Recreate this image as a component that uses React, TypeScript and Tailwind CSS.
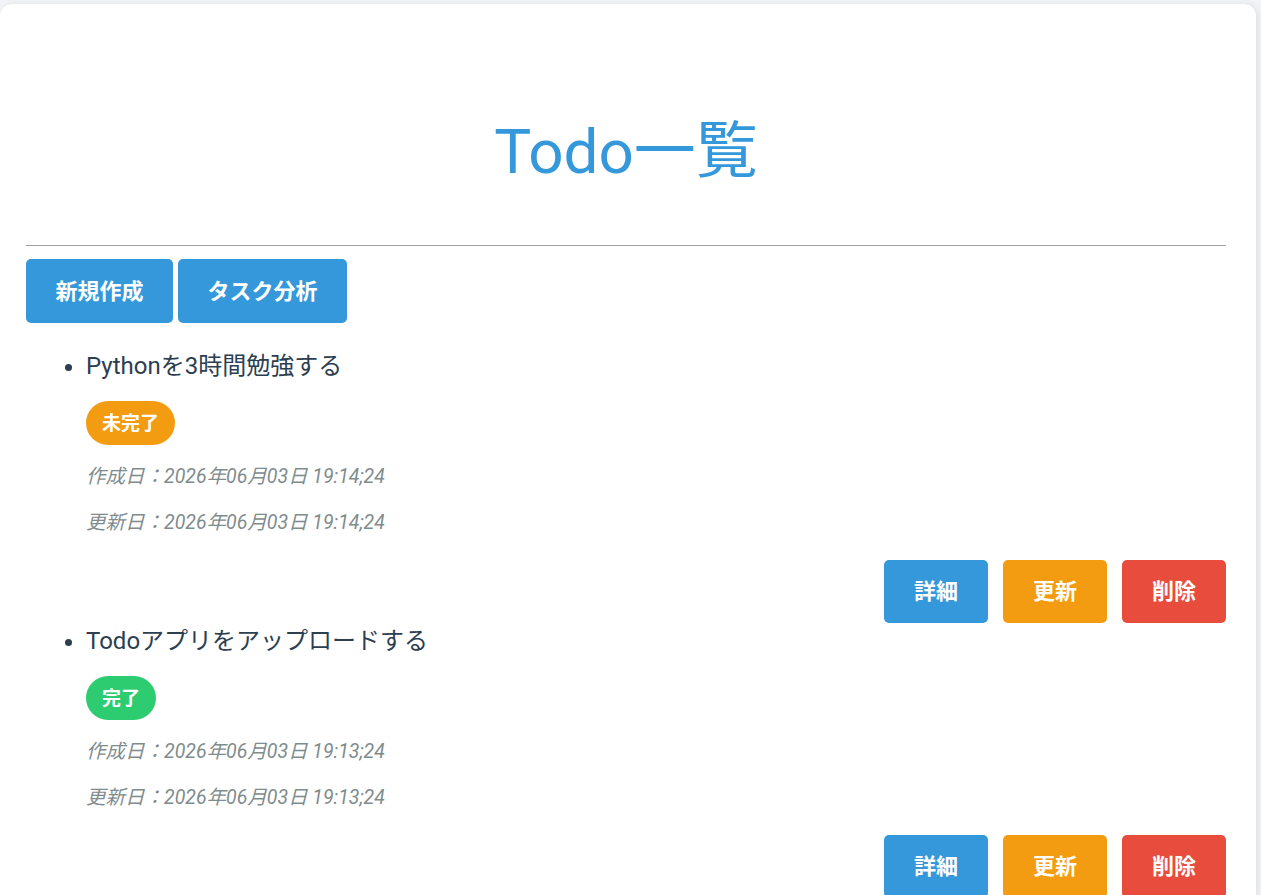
import React from "react";

type Todo = {
  title: string;
  done: boolean;
  created: string;
  updated: string;
};

const todos: Todo[] = [
  {
    title: "Pythonを3時間勉強する",
    done: false,
    created: "2026年06月03日 19:14;24",
    updated: "2026年06月03日 19:14;24",
  },
  {
    title: "Todoアプリをアップロードする",
    done: true,
    created: "2026年06月03日 19:13;24",
    updated: "2026年06月03日 19:13;24",
  },
];

const font = { fontFamily: 'Roboto, "Noto Sans CJK JP", sans-serif' };

const TodoItem = ({ todo }: { todo: Todo }) => (
  <li className="list-disc text-[24px] leading-[32px] text-[#2c3e50] marker:text-[#2c3e50]">
    <div>{todo.title}</div>
    <div className="mt-[19px] leading-none">
      <span
        className={
          "inline-flex h-[44px] items-center rounded-full px-[16px] text-[19px] font-bold text-white " +
          (todo.done ? "bg-[#2ecc71]" : "bg-[#f39c12]")
        }
      >
        {todo.done ? "完了" : "未完了"}
      </span>
    </div>
    <p className="mt-[17px] text-[19.5px] leading-[30px] italic text-[#7f8c8d]">
      作成日：{todo.created}
    </p>
    <p className="mt-[16px] text-[19.5px] leading-[30px] italic text-[#7f8c8d]">
      更新日：{todo.updated}
    </p>
    <div className="mt-[22px] flex justify-end gap-[15px]">
      <button className="h-[63px] rounded-[5px] bg-[#3498db] px-[30px] text-[22px] font-bold text-white">
        詳細
      </button>
      <button className="h-[63px] rounded-[5px] bg-[#f39c12] px-[30px] text-[22px] font-bold text-white">
        更新
      </button>
      <button className="h-[63px] rounded-[5px] bg-[#e74c3c] px-[30px] text-[22px] font-bold text-white">
        削除
      </button>
    </div>
  </li>
);

export default function App() {
  return (
    <div className="min-h-screen bg-[#f2f3f7] pt-[4px] pr-[5px]" style={font}>
      <div className="min-h-[900px] rounded-[12px] bg-white pl-[26px] pr-[30px] pt-[108px] pb-[20px] shadow-[2px_0_6px_rgba(0,0,0,0.08)]">
        <h1 className="text-center text-[62px] leading-[80px] font-normal text-[#3498db]">
          Todo一覧
        </h1>
        <hr className="mt-[53px] border-t border-[#9e9e9e]" />
        <div className="mt-[13px] flex gap-[5px]">
          <button className="h-[64px] rounded-[5px] bg-[#3498db] px-[29.5px] text-[22px] font-bold text-white">
            新規作成
          </button>
          <button className="h-[64px] rounded-[5px] bg-[#3498db] px-[29.5px] text-[22px] font-bold text-white">
            タスク分析
          </button>
        </div>
        <ul className="mt-[27px] flex flex-col gap-[2px] pl-[60px]">
          {todos.map((t) => (
            <TodoItem key={t.title} todo={t} />
          ))}
        </ul>
      </div>
    </div>
  );
}
